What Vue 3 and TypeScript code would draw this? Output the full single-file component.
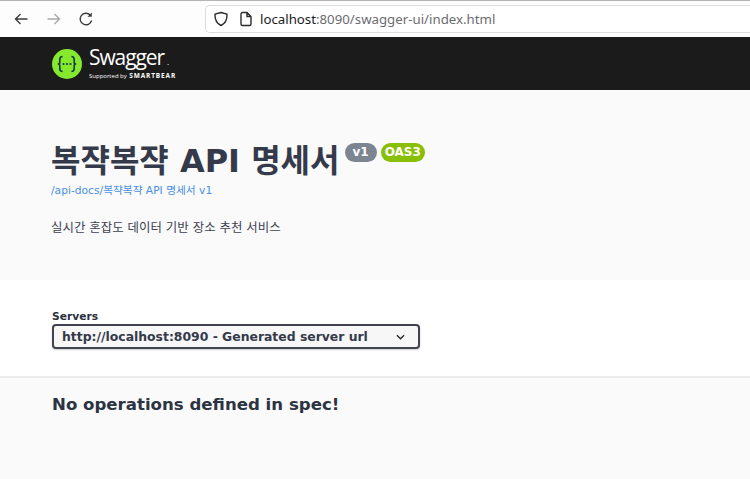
<script setup lang="ts">
const title: string = '복쟉복쟉 API 명세서'
</script>

<template>
  <div class="page">
    <div class="browser">
      <div class="nav">
        <svg class="nav-icon" viewBox="0 0 16 16"><path d="M14.500 8H2.500M7.500 3 2.500 8l5 5" fill="none" stroke="#3d3d40" stroke-width="1.400"/></svg>
        <svg class="nav-icon" viewBox="0 0 16 16"><path d="M1.500 8H13.500M8.500 3l5 5-5 5" fill="none" stroke="#a9a9ac" stroke-width="1.400"/></svg>
        <svg class="nav-icon" viewBox="0 0 16 16"><path d="M13.600 9.500A5.800 5.800 0 1 1 12.200 4" fill="none" stroke="#3d3d40" stroke-width="1.400"/><path d="M13.800 1.400v4.400H9.400z" fill="#3d3d40"/></svg>
      </div>
      <div class="urlbar">
        <svg class="shield" viewBox="0 0 16 16"><path d="M8 1.500 14 3.200c.2 5.400-1.700 9.200-6 11.300C3.700 12.400 1.800 8.600 2 3.200z" fill="none" stroke="#2b2b2e" stroke-width="1.400" stroke-linejoin="round"/></svg>
        <svg class="file" viewBox="0 0 16 16"><path d="M3 3a1.500 1.500 0 0 1 1.500-1.500H9L13 5.500V13a1.500 1.500 0 0 1-1.500 1.500h-7A1.500 1.500 0 0 1 3 13zM9 1.500v4h4" fill="none" stroke="#2b2b2e" stroke-width="1.400"/></svg>
        <span class="url"><b>localhost</b><span>:8090/swagger-ui/index.html</span></span>
      </div>
    </div>

    <header class="topbar">
      <svg class="logo" viewBox="0 0 30 30">
        <circle cx="15" cy="15" r="15" fill="#85ea2d"/>
        <path d="M10.600 7.500c-2.600 0-2.800 1.200-2.800 3v2.700c0 1.300-.7 1.800-2 1.800 1.300 0 2 .5 2 1.800v2.700c0 1.800.2 3 2.800 3M19.400 7.500c2.600 0 2.800 1.200 2.800 3v2.700c0 1.300.7 1.800 2 1.800-1.300 0-2 .5-2 1.800v2.700c0 1.800-.2 3-2.800 3" fill="none" stroke="#173647" stroke-width="1.600"/>
        <circle cx="11.500" cy="15" r="1.100" fill="#173647"/><circle cx="15" cy="15" r="1.100" fill="#173647"/><circle cx="18.500" cy="15" r="1.100" fill="#173647"/>
      </svg>
      <div class="brand">
        <div class="brand-name">Swagger<i>.</i></div>
        <div class="brand-sub"><span>Supported by</span> <b>SMARTBEAR</b></div>
      </div>
    </header>

    <section class="info">
      <div class="title-row">
        <h1>{{ title }}</h1>
        <span class="badge grey">v1</span>
        <span class="badge green">OAS3</span>
      </div>
      <a class="link">/api-docs/복쟉복쟉 API 명세서 v1</a>
      <p class="desc">실시간 혼잡도 데이터 기반 장소 추천 서비스</p>
    </section>

    <section class="servers">
      <div class="servers-label">Servers</div>
      <div class="select">
        <span>http://localhost:8090 - Generated server url</span>
        <svg class="chev" viewBox="0 0 10 6"><path d="M1 1l4 4 4-4" fill="none" stroke="#222" stroke-width="1.400"/></svg>
      </div>
    </section>

    <section class="empty">
      <h3>No operations defined in spec!</h3>
    </section>
  </div>
</template>

<style>
html, body { margin: 0; background: #fafafa; }
</style>

<style scoped>
.page { width: 750px; height: 479px; overflow: hidden; display: flex; flex-direction: column; background: #fafafa; font-family: "DejaVu Sans", "Noto Sans CJK KR", sans-serif; }
.browser { height: 37px; box-sizing: border-box; flex: none; display: flex; align-items: center; background: #fdfdfd; border-top: 1px solid #b5b5b5; }
.nav { display: flex; width: 205px; padding-left: 13px; gap: 16.500px; box-sizing: border-box; }
.nav-icon { width: 16px; height: 16px; }
.urlbar { width: 545px; height: 28px; box-sizing: border-box; border: 1px solid #dcdcdc; border-right: 0; border-radius: 5px 0 0 5px; background: #fff; display: flex; align-items: center; padding-left: 7px; margin-top: -1px; }
.shield { width: 16px; height: 16px; margin-right: 9px; }
.file { width: 16px; height: 16px; margin-right: 6px; }
.url { font: 13.250px "Noto Sans", sans-serif; color: #6c6c70; }
.url b { font-weight: 400; color: #1c1c1e; }
.topbar { height: 53px; flex: none; box-sizing: border-box; background: #1b1b1b; padding-left: 52px; display: flex; align-items: center; }
.logo { width: 30px; height: 30px; }
.brand { margin-left: 7px; color: #fff; margin-top: 0; }
.brand-name { font: 400 21px/21px "Open Sans", sans-serif; letter-spacing: -1.100px; }
.brand-name i { font-size: 8px; font-style: normal; margin-left: 3px; }
.brand-sub { font: 400 6px/8px "Open Sans", sans-serif; }
.brand-sub b { font-size: 6.500px; letter-spacing: 0.850px; margin-left: 1px; }
.info { height: 190px; flex: none; box-sizing: border-box; padding: 51px 0 0 51px; color: #3b4151; }
.title-row { display: flex; align-items: flex-start; height: 41px; }
h1 { margin: 0; font-size: 32px; line-height: 40px; font-weight: 700; white-space: nowrap; color: #343a4a; }
.badge { color: #fff; font-weight: 700; font-size: 12px; line-height: 18px; height: 19px; border-radius: 10px; margin-top: 2px; }
.grey { background: #7d8492; margin-left: 5px; padding: 0 8px; }
.green { background: #89bf04; margin-left: 4px; padding: 0 4px; }
.link { display: block; margin-top: 1px; font-size: 10.700px; line-height: 16px; color: #4990e2; }
.desc { margin: 20px 0 0; font-size: 12.450px; line-height: 18px; }
.servers { height: 98px; flex: none; box-sizing: border-box; background: #fff; border-bottom: 2px solid #ececec; padding: 30px 0 0 52px; color: #3b4151; }
.servers-label { font-size: 10.700px; line-height: 13px; font-weight: 700; color: #2b3040; }
.select { width: 368px; height: 25px; box-sizing: border-box; margin-top: 1px; border: 2px solid #41444e; border-radius: 4px; background: #f7f7f7; box-shadow: 0 1px 2px rgba(0,0,0,.2); display: flex; align-items: center; justify-content: space-between; padding: 0 13px 0 8px; font-size: 12.400px; font-weight: 700; color: #343a4a; white-space: nowrap; }
.chev { width: 9px; height: 6px; }
.empty { padding: 15px 0 0 52px; }
h3 { margin: 0; font-size: 16.600px; line-height: 24px; font-weight: 700; color: #2c3342; }
</style>
